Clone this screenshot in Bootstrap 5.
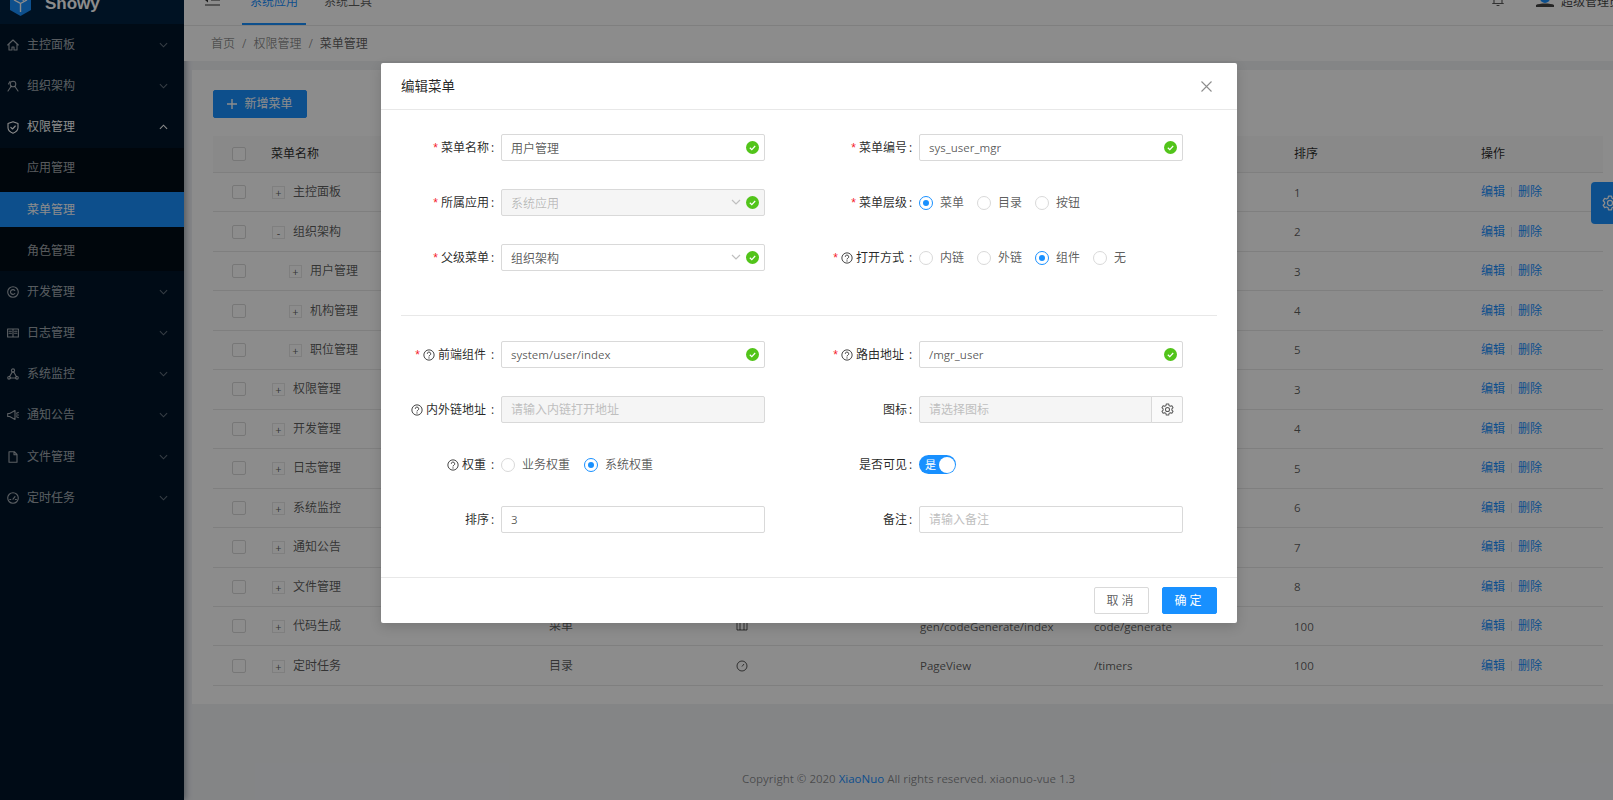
<!doctype html>
<html lang="zh"><head><meta charset="utf-8"><title>菜单管理</title>
<link rel="stylesheet" href="https://cdn.jsdelivr.net/npm/bootstrap@5.3.0/dist/css/bootstrap.min.css">
<style>
html,body{height:800px;overflow:hidden}
body{font:12px/1.5 "Open Sans","Noto Sans CJK SC",sans-serif;background:#f0f2f5;color:rgba(0,0,0,.65)}
.shell{height:800px;width:1613px}
svg{display:block;flex:none}
.ln{fill:none;stroke:currentColor;stroke-width:1.1;stroke-linecap:round;stroke-linejoin:round}
.side{width:184px;flex:none;background:#001529;color:rgba(255,255,255,.65);box-shadow:2px 0 6px rgba(0,21,41,.35)}
.brand{height:24.4px;overflow:hidden;background:#002140;color:#fff}
.brand-in{height:40px;margin-top:-16px;padding-left:10px;gap:14px}
.brand-name{font:bold 17px "Liberation Sans",sans-serif}
.mitem{height:41.17px;padding:0 16px 0 7px;gap:8px}
.mitem .chev{margin-left:auto;opacity:.6}
.submenu{background:#000c17;padding:3.45px 0}
.subi{padding-left:27px;height:34.3px;display:flex;align-items:center;margin-bottom:6.9px}
.subi:last-child{margin-bottom:0}
.subi.on{background:#1890ff;color:#fff}
.mitem.open{color:#fff}
.topbar{height:26px;background:#fff;border-bottom:1px solid #e8e8e8;overflow:hidden;flex:none}
.top-in{height:40px;margin-top:-18px;padding-left:21px}
.hic{margin-top:-4px}
.tab-a{width:64px;margin-left:22px;text-align:center;height:43px;line-height:40px;color:#1890ff;border-bottom:2px solid #1890ff;align-self:flex-start}
.tab-b{margin-left:18px}
.crumb{height:35px;background:#fff;padding-left:27px;gap:7px;flex:none}
.crumb .cur{color:rgba(0,0,0,.65)}
.crumb span{color:rgba(0,0,0,.45)}
.panel{margin:9px 0 0 8px;background:#fff;height:634px;padding:20px 10px 0 21px;flex:none}
.add-btn{--bs-btn-bg:#1890ff;--bs-btn-border-color:#1890ff;--bs-btn-color:#fff;--bs-btn-font-size:12px;--bs-btn-padding-x:0;--bs-btn-padding-y:0;--bs-btn-border-radius:2px;width:94px;height:28px;gap:7px}
.mtable{width:1390px;table-layout:fixed;margin:18px 0 0;font-size:12px;--bs-table-bg:transparent;--bs-table-color:rgba(0,0,0,.65)}
.mtable th{background:#fafafa;height:36.5px;font-weight:400;color:rgba(0,0,0,.85);padding:0 16px;vertical-align:middle;border-bottom:1px solid #e8e8e8}
.mtable td{height:39.46px;padding:0 16px;vertical-align:middle;border-bottom:1px solid #e8e8e8}
.mtable .ck{padding:0 0 0 19px}
.mtable .icell{padding:0 0 0 17px}
.cbx{display:block;width:14px;height:14px;border:1px solid #d9d9d9;background:#fff;border-radius:2px}
.tree{display:inline-flex;width:13px;height:13px;border:1px solid #e8e8e8;align-items:center;justify-content:center;margin-right:8px;line-height:1;font-size:11px;vertical-align:-1px;background:#fff}
.mtable .sub0{padding-left:17px}
.mtable .sub1{padding-left:34px}
.mtable .lat,.foot,.ctl .form-control.lat{font-size:11.5px}
.lk{color:#1890ff}
.vsep{display:inline-block;width:1px;height:10px;background:#e8e8e8;margin:0 6px;vertical-align:-1px}
.foot{text-align:center;color:rgba(0,0,0,.45);padding:66px 0 0 20px}
.foot span{color:#1890ff}
.setbtn{position:absolute;right:0;top:182px;width:22px;height:42px;background:#1890ff;border-radius:4px 0 0 4px;color:#fff;overflow:hidden;padding:13px 0 0 11px}
.veil{position:absolute;inset:0;background:rgba(0,0,0,.45)}
.dlg{position:absolute;left:381px;top:63px;width:856px;height:560px;border:0;background:#fff;border-radius:2px;box-shadow:0 4px 12px rgba(0,0,0,.15)}
.dlg .modal-header{height:47px;padding:0 20px;border-bottom:1px solid #e8e8e8;flex:none}
.dlg-title{font-size:13.5px;color:rgba(0,0,0,.85)}
.dlg .x{margin-left:auto;color:rgba(0,0,0,.45);margin-right:5px}
.dlg .modal-body{padding:24px 10px 0;flex:none;height:467px}
.fld{height:27px;margin-bottom:28px;color:rgba(0,0,0,.85)}
.lab{width:104px;margin-right:6px;flex:none;display:flex;justify-content:flex-end;align-items:center;white-space:nowrap}
.lab i{font-style:normal;color:#f5222d;font-family:"Liberation Sans",sans-serif;margin-right:3px}
.lab svg{width:12px;height:12px;margin-right:3px}
.lab b{font-weight:400;margin-left:2px;width:4px}
.lab b.w{margin-left:5px;width:4px}
.ctl{width:264px;position:relative;flex:none}
.ctl .form-control{height:27px;min-height:27px;font-size:12px;padding:0 9px;border-radius:2px;border-color:#d9d9d9;color:rgba(0,0,0,.65);box-shadow:none}
.form-control::placeholder{color:#bfbfbf}
.ctl .form-control:disabled{background:#f5f5f5;color:rgba(0,0,0,.25)}
.ok{position:absolute;right:6px;top:7px;width:13px;height:13px}
.dn{position:absolute;right:24px;top:10px;color:#bfbfbf}
.rads{color:rgba(0,0,0,.65)}
.rad{display:flex;align-items:center}
.rad .dot{width:14px;height:14px;border:1px solid #d9d9d9;border-radius:50%;background:#fff;margin-right:7px;flex:none;position:relative}
.rad.on .dot{border-color:#1890ff}
.rad.on .dot::after{content:"";position:absolute;left:3px;top:3px;width:6px;height:6px;border-radius:50%;background:#1890ff}
.rad.w58{width:58px}
.rad.w83{width:83px}
.swt{width:37px;height:19px;border-radius:10px;background:#1890ff;color:#fff;position:relative;font-size:11px;line-height:19px;padding-left:6px}
.swt::after{content:"";position:absolute;right:1.5px;top:1.5px;width:16px;height:16px;background:#fff;border-radius:50%}
.ig .form-control{border-top-right-radius:0;border-bottom-right-radius:0}
.ig .input-group-text{width:32px;padding:0;justify-content:center;background:#fafafa;border-color:#d9d9d9;border-radius:0 2px 2px 0;color:rgba(0,0,0,.65)}
.dvd{height:1px;background:#e8e8e8;margin:16px 10px 25px}
.dlg .modal-footer{height:46px;padding:0 20px;border-top:1px solid #e8e8e8;gap:13px;flex:none}
.fbtn{width:55px;height:27px;padding:0;font-size:12px;border-radius:2px;margin:0;letter-spacing:3px}
.fbtn.c{background:#fff;border:1px solid #d9d9d9;color:rgba(0,0,0,.65)}
.fbtn.p{background:#1890ff;border:1px solid #1890ff;color:#fff}
</style></head><body>
<svg width="0" height="0" style="position:absolute"><defs>
<symbol id="chevd" viewBox="0 0 10 6"><path d="M1 1l4 4 4-4" fill="none" stroke="currentColor" stroke-width="1.2"/></symbol>
<symbol id="q" viewBox="0 0 14 14"><circle cx="7" cy="7" r="6" fill="none" stroke="currentColor"/><path d="M5 5.6a2 2 0 1 1 3 1.7c-.7.4-1 .7-1 1.4" fill="none" stroke="currentColor"/><circle cx="7" cy="10.4" r=".7" fill="currentColor"/></symbol>
<symbol id="okc" viewBox="0 0 13 13"><circle cx="6.5" cy="6.5" r="6.5" fill="#52c41a"/><path d="M3.8 6.7l2 1.9 3.4-3.6" fill="none" stroke="#fff" stroke-width="1.2"/></symbol>
<symbol id="gear" viewBox="0 0 14 14"><path class="ln" d="M5.7 1h2.6l.4 1.8 1.3.7 1.7-.6 1.3 2.2-1.3 1.2v1.4l1.3 1.2-1.3 2.2-1.7-.6-1.3.7-.4 1.8H5.7l-.4-1.8-1.3-.7-1.7.6L1 8.9l1.3-1.2V6.3L1 5.1l1.3-2.2 1.7.6 1.3-.7z"/><circle class="ln" cx="7" cy="7" r="2.2"/></symbol>
</defs></svg>
<div class="shell d-flex position-relative">
<aside class="side">
 <div class="brand"><div class="brand-in d-flex align-items-center">
  <svg width="21" height="24" viewBox="0 0 21 24"><path d="M10.500 0L21 6v12l-10.500 6L0 18V6z" fill="#1890ff"/><path d="M4 8l6.500 3.500V20M17 8l-6.500 3.500M7 4.500l7 4" fill="none" stroke="#fff" stroke-width="1.400"/></svg>
  <span class="brand-name">Snowy</span></div></div>
 <div class="mitem d-flex align-items-center"><svg width="12" height="12" viewBox="0 0 12 12"><path class="ln" d="M.7 6L6 1l5.300 5M2 5v6h3V8h2v3h3V5"/></svg><span>主控面板</span><svg class="chev" width="9" height="6"><use href="#chevd"/></svg></div>
 <div class="mitem d-flex align-items-center"><svg width="12" height="12" viewBox="0 0 12 12"><circle class="ln" cx="6" cy="4" r="2.800"/><path class="ln" d="M1 11l3-4.500M11 11L8 6.500M3 1.500L1.500 4"/></svg><span>组织架构</span><svg class="chev" width="9" height="6"><use href="#chevd"/></svg></div>
 <div class="mitem open d-flex align-items-center"><svg width="12" height="13" viewBox="0 0 12 13"><path class="ln" d="M6 .8l5 1.700v4.300c0 2.600-2.300 4.400-5 5.400-2.700-1-5-2.800-5-5.400V2.500z"/><path class="ln" d="M3.800 6.300l1.700 1.700 2.800-3"/></svg><span>权限管理</span><svg class="chev" width="9" height="6" style="transform:rotate(180deg);opacity:1"><use href="#chevd"/></svg></div>
 <div class="submenu">
  <div class="subi">应用管理</div><div class="subi on">菜单管理</div><div class="subi">角色管理</div>
 </div>
 <div class="mitem d-flex align-items-center"><svg width="12" height="12" viewBox="0 0 12 12"><circle class="ln" cx="6" cy="6" r="5.300"/><path class="ln" d="M7.800 4.500a2.400 2.400 0 1 0 0 3"/></svg><span>开发管理</span><svg class="chev" width="9" height="6"><use href="#chevd"/></svg></div>
 <div class="mitem d-flex align-items-center"><svg width="12" height="12" viewBox="0 0 12 12"><path class="ln" d="M.6 2h10.800v8H.6zM6 2v8M2.200 4.200h2.200M2.200 6.200h2.200M7.600 4.200h2.200M7.600 6.200h2.200"/></svg><span>日志管理</span><svg class="chev" width="9" height="6"><use href="#chevd"/></svg></div>
 <div class="mitem d-flex align-items-center"><svg width="12" height="12" viewBox="0 0 12 12"><circle class="ln" cx="6" cy="2.500" r="1.600"/><circle class="ln" cx="2" cy="9.800" r="1.300"/><circle class="ln" cx="10" cy="9.800" r="1.300"/><path class="ln" d="M5.200 4L2.700 8.600M6.800 4l2.500 4.600M3.300 10h5.400"/></svg><span>系统监控</span><svg class="chev" width="9" height="6"><use href="#chevd"/></svg></div>
 <div class="mitem d-flex align-items-center"><svg width="12" height="12" viewBox="0 0 12 12"><path class="ln" d="M.7 4.500h2L8 1.500v9l-5.300-3h-2zM9.500 4.200l1.800-.8M9.500 6h1.900M9.500 7.800l1.800.8"/></svg><span>通知公告</span><svg class="chev" width="9" height="6"><use href="#chevd"/></svg></div>
 <div class="mitem d-flex align-items-center"><svg width="12" height="12" viewBox="0 0 12 12"><path class="ln" d="M2 .7h5.300L10 3.500v7.800H2zM7 .9v2.800h2.800"/></svg><span>文件管理</span><svg class="chev" width="9" height="6"><use href="#chevd"/></svg></div>
 <div class="mitem d-flex align-items-center"><svg width="12" height="12" viewBox="0 0 12 12"><circle class="ln" cx="6" cy="6" r="5.300"/><path class="ln" d="M6 7.200l2-2.500M2.800 7.500h1M8.400 7.500h1"/></svg><span>定时任务</span><svg class="chev" width="9" height="6"><use href="#chevd"/></svg></div>
</aside>
<main class="flex-grow-1 d-flex flex-column" style="min-width:0">
 <header class="topbar"><div class="top-in d-flex align-items-center">
  <svg class="hic" width="15" height="12" viewBox="0 0 15 12"><path d="M0 1h15M6 6h9M0 11h15" stroke="rgba(0,0,0,.8)" stroke-width="1.200" fill="none"/><path d="M0 6l3-2.500v5z" fill="rgba(0,0,0,.8)"/></svg>
  <div class="tab-a">系统应用</div><div class="tab-b">系统工具</div>
  <svg class="ms-auto hic" width="12" height="13" viewBox="0 0 12 13" style="margin-right:32px"><path class="ln" d="M2 9.500V5a4 4 0 0 1 8 0v4.500M.7 9.500h10.600M5 11.500h2"/></svg>
  <svg class="hic" width="18" height="16" viewBox="0 0 18 16" style="margin-right:7px"><circle cx="9" cy="6" r="5" fill="#1890ff"/><path d="M0 13c3-2 15-2 18 0v2H0z" fill="#444"/></svg>
  <span style="white-space:nowrap;width:52px;overflow:hidden;color:rgba(0,0,0,.75)">超级管理员</span>
 </div></header>
 <nav class="crumb d-flex align-items-center"><span>首页</span><span>/</span><span>权限管理</span><span>/</span><span class="cur">菜单管理</span></nav>
 <section class="panel">
  <button class="btn add-btn d-flex align-items-center justify-content-center" type="button"><svg width="10" height="10" viewBox="0 0 10 10"><path d="M5 0v10M0 5h10" stroke="#fff" stroke-width="1.400"/></svg>新增菜单</button>
  <table class="table mtable"><colgroup><col style="width:42px"><col style="width:278px"><col style="width:186px"><col style="width:185px"><col style="width:174px"><col style="width:200px"><col style="width:187px"><col style="width:138px"></colgroup>
  <thead><tr><th class="ck" style="padding:0 0 0 19px"><span class="cbx"></span></th><th>菜单名称</th><th>菜单类型</th><th>图标</th><th>前端组件</th><th>路由地址</th><th>排序</th><th>操作</th></tr></thead>
  <tbody id="rows"></tbody></table>
 </section>
 <footer class="foot">Copyright © 2020 <span>XiaoNuo</span> All rights reserved. xiaonuo-vue 1.3</footer>
</main>
<div class="setbtn"><svg width="16" height="16"><use href="#gear"/></svg></div>
<div class="veil"></div>
<div class="modal-content dlg">
 <div class="modal-header"><span class="dlg-title">编辑菜单</span><svg class="x" width="11" height="11" viewBox="0 0 11 11"><path d="M.5.500l10 10M10.500.500l-10 10" stroke="currentColor" stroke-width="1.100"/></svg></div>
 <div class="modal-body">
  <div class="row g-0" style="width:836px">
   <div class="col-6">
    <div class="fld d-flex align-items-center"><div class="lab"><i>*</i>菜单名称<b>:</b></div><div class="ctl"><input class="form-control" value="用户管理"><svg class="ok"><use href="#okc"/></svg></div></div>
    <div class="fld d-flex align-items-center"><div class="lab"><i>*</i>所属应用<b>:</b></div><div class="ctl"><input class="form-control" value="系统应用" disabled><svg class="dn" width="10" height="6"><use href="#chevd"/></svg><svg class="ok"><use href="#okc"/></svg></div></div>
    <div class="fld d-flex align-items-center"><div class="lab"><i>*</i>父级菜单<b>:</b></div><div class="ctl"><input class="form-control" value="组织架构"><svg class="dn" width="10" height="6"><use href="#chevd"/></svg><svg class="ok"><use href="#okc"/></svg></div></div>
   </div>
   <div class="col-6">
    <div class="fld d-flex align-items-center"><div class="lab"><i>*</i>菜单编号<b>:</b></div><div class="ctl"><input class="form-control lat" value="sys_user_mgr"><svg class="ok"><use href="#okc"/></svg></div></div>
    <div class="fld d-flex align-items-center"><div class="lab"><i>*</i>菜单层级<b>:</b></div><div class="rads d-flex"><div class="rad on w58"><span class="dot"></span>菜单</div><div class="rad w58"><span class="dot"></span>目录</div><div class="rad w58"><span class="dot"></span>按钮</div></div></div>
    <div class="fld d-flex align-items-center"><div class="lab"><i>*</i><svg><use href="#q"/></svg>打开方式<b class="w">:</b></div><div class="rads d-flex"><div class="rad w58"><span class="dot"></span>内链</div><div class="rad w58"><span class="dot"></span>外链</div><div class="rad on w58"><span class="dot"></span>组件</div><div class="rad w58"><span class="dot"></span>无</div></div></div>
   </div>
  </div>
  <div class="dvd"></div>
  <div class="row g-0" style="width:836px">
   <div class="col-6">
    <div class="fld d-flex align-items-center"><div class="lab"><i>*</i><svg><use href="#q"/></svg>前端组件<b class="w">:</b></div><div class="ctl"><input class="form-control lat" value="system/user/index"><svg class="ok"><use href="#okc"/></svg></div></div>
    <div class="fld d-flex align-items-center"><div class="lab"><svg><use href="#q"/></svg>内外链地址<b class="w">:</b></div><div class="ctl"><input class="form-control" placeholder="请输入内链打开地址" disabled></div></div>
    <div class="fld d-flex align-items-center"><div class="lab"><svg><use href="#q"/></svg>权重<b class="w">:</b></div><div class="rads d-flex"><div class="rad w83"><span class="dot"></span>业务权重</div><div class="rad on w83"><span class="dot"></span>系统权重</div></div></div>
    <div class="fld d-flex align-items-center"><div class="lab">排序<b>:</b></div><div class="ctl"><input class="form-control lat" value="3"></div></div>
   </div>
   <div class="col-6">
    <div class="fld d-flex align-items-center"><div class="lab"><i>*</i><svg><use href="#q"/></svg>路由地址<b class="w">:</b></div><div class="ctl"><input class="form-control lat" value="/mgr_user"><svg class="ok"><use href="#okc"/></svg></div></div>
    <div class="fld d-flex align-items-center"><div class="lab">图标<b>:</b></div><div class="ctl input-group ig"><input class="form-control" placeholder="请选择图标" disabled><span class="input-group-text"><svg width="13" height="13"><use href="#gear"/></svg></span></div></div>
    <div class="fld d-flex align-items-center"><div class="lab">是否可见<b>:</b></div><div class="swt">是</div></div>
    <div class="fld d-flex align-items-center"><div class="lab">备注<b>:</b></div><div class="ctl"><input class="form-control" placeholder="请输入备注"></div></div>
   </div>
  </div>
 </div>
 <div class="modal-footer"><button class="btn fbtn c" type="button">取消</button><button class="btn fbtn p" type="button">确定</button></div>
</div>
</div>
<script>
var d=[["主控面板",0,"+","目录","/","/","1"],["组织架构",0,"-","目录","PageView","/auth","2"],["用户管理",1,"+","菜单","system/user/index","/mgr_user","3"],["机构管理",1,"+","菜单","system/org/index","/org","4"],["职位管理",1,"+","菜单","system/pos/index","/pos","5"],["权限管理",0,"+","目录","PageView","/auth","3"],["开发管理",0,"+","目录","PageView","/auth","4"],["日志管理",0,"+","目录","PageView","/log","5"],["系统监控",0,"+","目录","PageView","/monitor","6"],["通知公告",0,"+","目录","PageView","/notice","7"],["文件管理",0,"+","目录","PageView","/file","8"],["代码生成",0,"+","菜单","gen/codeGenerate/index","code/generate","100"],["定时任务",0,"+","目录","PageView","/timers","100"]];
var ic='<svg width="12" height="12" viewBox="0 0 12 12"><circle cx="6" cy="6" r="5" fill="none" stroke="currentColor"/><path d="M6 6.500l2-2.500" stroke="currentColor" fill="none"/></svg>';
var ic2='<svg width="12" height="12" viewBox="0 0 12 12"><path d="M1 2h10v8H1zM4 2v8M8 2v8" fill="none" stroke="currentColor"/></svg>';
document.getElementById("rows").innerHTML=d.map(function(r){return '<tr><td class="ck"><span class="cbx"></span></td><td class="'+(r[1]?'sub1':'sub0')+'"><span class="tree">'+r[2]+'</span>'+r[0]+'</td><td>'+r[3]+'</td><td class="icell">'+(r[0]=="代码生成"?ic2:ic)+'</td><td class="lat">'+r[4]+'</td><td class="lat">'+r[5]+'</td><td class="lat">'+r[6]+'</td><td><span class="lk">编辑</span><span class="vsep"></span><span class="lk">删除</span></td></tr>'}).join("");
</script>
<script src="https://cdn.jsdelivr.net/npm/bootstrap@5.3.0/dist/js/bootstrap.bundle.min.js"></script>
</body></html>
